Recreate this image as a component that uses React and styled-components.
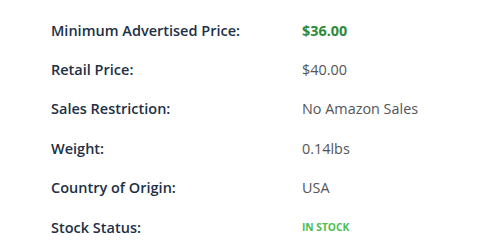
import React from "react";
import styled, { createGlobalStyle } from "styled-components";

const Global = createGlobalStyle`
  html, body { margin: 0; padding: 0; background: #fff; }
  body { font-family: "Open Sans", "Liberation Sans", sans-serif; }
`;

const Table = styled.div`
  display: grid;
  grid-template-columns: 251px 1fr;
  padding: 10.5px 0 0 51px;
  width: 500px;
  box-sizing: border-box;
`;

const Label = styled.div`
  height: 39.4px;
  display: flex;
  align-items: center;
  font-size: 14.5px;
  font-weight: 600;
  color: #1d3045;
  white-space: nowrap;
`;

const Value = styled.div`
  height: 39.4px;
  display: flex;
  align-items: center;
  font-size: ${(p) => (p.$tone === "stock" ? "10.2px" : "14.4px")};
  font-weight: ${(p) => (p.$tone ? 700 : 400)};
  color: ${(p) =>
    p.$tone === "map" ? "#2d8a3c" : p.$tone === "stock" ? "#4cbd4f" : "#555555"};
  text-transform: ${(p) => (p.$tone === "stock" ? "uppercase" : "none")};
  white-space: nowrap;
`;

const rows = [
  ["Minimum Advertised Price:", "$36.00", "map"],
  ["Retail Price:", "$40.00"],
  ["Sales Restriction:", "No Amazon Sales"],
  ["Weight:", "0.14lbs"],
  ["Country of Origin:", "USA"],
  ["Stock Status:", "In Stock", "stock"],
];

export default function App() {
  return (
    <>
      <Global />
      <Table>
        {rows.map(([l, v, t]) => (
          <React.Fragment key={l}>
            <Label>{l}</Label>
            <Value $tone={t}>{v}</Value>
          </React.Fragment>
        ))}
      </Table>
    </>
  );
}
